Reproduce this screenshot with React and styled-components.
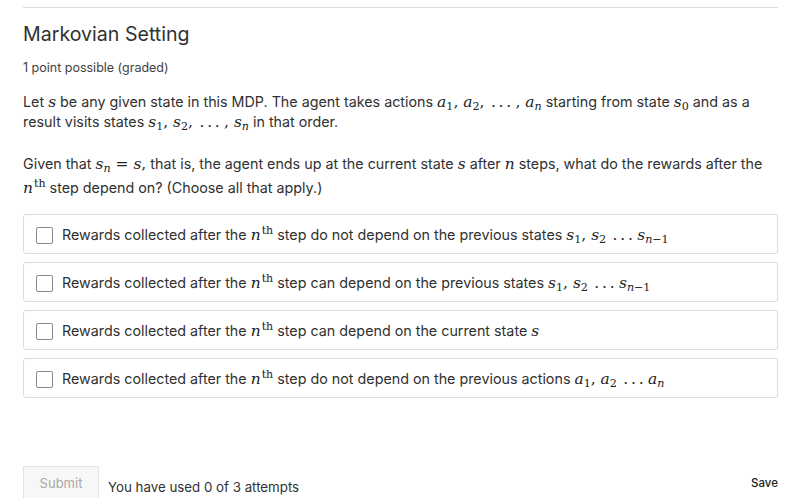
import styled, { createGlobalStyle } from "styled-components";

const Global = createGlobalStyle`
  body {
    margin: 0;
    background: #fff;
    font-family: Inter, "Noto Sans", sans-serif;
    color: #313131;
  }
`;

const Page = styled.div`
  padding: 7px 32px 0 23px;
  width: 810px;
  box-sizing: border-box;
`;

const Problem = styled.section`
  border-top: 1px solid #dcdcdc;
  padding-top: 14px;
`;

const Title = styled.h2`
  margin: 0;
  font-size: 19.6px;
  font-weight: 400;
  line-height: 24px;
  color: #313131;
`;

const Points = styled.div`
  margin-top: 14px;
  font-size: 12.5px;
  line-height: 16px;
  color: #414141;
`;

const Para = styled.p`
  margin: ${(p) => p.$top || 0}px 0 0;
  font-size: 14.3px;
  line-height: ${(p) => p.$lh || 20}px;
`;

const M = styled.span`
  font-family: "DejaVu Serif", "Liberation Serif", serif;
  font-style: italic;
  font-size: 1.08em;
  line-height: 1;
  white-space: nowrap;
  color: #222;
`;

const Sub = styled.sub`
  font-style: normal;
  font-size: 0.72em;
  vertical-align: -0.25em;
  line-height: 0;
`;

const SubI = styled(Sub)`
  font-style: italic;
`;

const Sup = styled.sup`
  font-style: normal;
  font-size: 0.72em;
  vertical-align: 0.55em;
  line-height: 0;
  margin-left: 1px;
`;

const Up = styled.span`
  font-style: normal;
`;

const Dots = styled.span`
  font-style: normal;
  letter-spacing: 0.18em;
  margin: 0 0.1em;
`;

const Options = styled.div`
  margin-top: 14px;
  display: flex;
  flex-direction: column;
  gap: 8px;
`;

const Option = styled.label`
  display: flex;
  align-items: center;
  gap: 9px;
  height: 40px;
  box-sizing: border-box;
  padding: 2px 12px 0;
  border: 1px solid #dcdcdc;
  border-radius: 3px;
  font-size: 14.3px;
  color: #313131;
`;

const Box = styled.span`
  width: 15px;
  height: 15px;
  flex: none;
  border: 1px solid #8a8a8a;
  border-radius: 2px;
  background: #fff;
`;

const Actions = styled.div`
  margin-top: 68px;
  display: flex;
  align-items: center;
  gap: 9px;
`;

const Submit = styled.button`
  width: 76px;
  height: 33px;
  border: 1px solid #e4e4e4;
  background: #f7f7f7;
  color: #a8a8a8;
  font-family: inherit;
  font-size: 13px;
  border-radius: 0;
  padding: 0;
`;

const Attempts = styled.span`
  font-size: 13.3px;
  color: #313131;
  margin-top: 8px;
`;

const Save = styled.span`
  margin-left: auto;
  font-size: 11.5px;
  font-weight: 500;
  color: #222;
  margin-top: 1px;
`;

const Nth = () => (
  <M>
    n<Sup>th</Sup>
  </M>
);

const options = [
  <>
    Rewards collected after the <Nth /> step do not depend on the previous states{" "}
    <M>
      s<Sub>1</Sub>
      <Up>, </Up>s<Sub>2</Sub> <Dots>...</Dots>s
      <SubI>
        n<Up>−1</Up>
      </SubI>
    </M>
  </>,
  <>
    Rewards collected after the <Nth /> step can depend on the previous states{" "}
    <M>
      s<Sub>1</Sub>
      <Up>, </Up>s<Sub>2</Sub> <Dots>...</Dots>s
      <SubI>
        n<Up>−1</Up>
      </SubI>
    </M>
  </>,
  <>
    Rewards collected after the <Nth /> step can depend on the current state <M>s</M>
  </>,
  <>
    Rewards collected after the <Nth /> step do not depend on the previous actions{" "}
    <M>
      a<Sub>1</Sub>
      <Up>, </Up>a<Sub>2</Sub> <Dots>...</Dots>a<SubI>n</SubI>
    </M>
  </>,
];

export default function App() {
  return (
    <Page>
      <Global />
      <Problem>
        <Title>Markovian Setting</Title>
        <Points>1 point possible (graded)</Points>
        <Para $top={16}>
          Let <M>s</M> be any given state in this MDP. The agent takes actions{" "}
          <M>
            a<Sub>1</Sub>
            <Up>, </Up>a<Sub>2</Sub>
            <Up>, </Up>
            <Dots>...</Dots>
            <Up>, </Up>a<SubI>n</SubI>
          </M>{" "}
          starting from state{" "}
          <M>
            s<Sub>0</Sub>
          </M>{" "}
          and as a result visits states{" "}
          <M>
            s<Sub>1</Sub>
            <Up>, </Up>s<Sub>2</Sub>
            <Up>, </Up>
            <Dots>...</Dots>
            <Up>, </Up>s<SubI>n</SubI>
          </M>{" "}
          in that order.
        </Para>
        <Para $top={20} $lh={24}>
          Given that{" "}
          <M>
            s<SubI>n</SubI> <Up>=</Up> s<Up>,</Up>
          </M>{" "}
          that is, the agent ends up at the current state <M>s</M> after <M>n</M>{" "}
          steps, what do the rewards after the <Nth /> step depend on? (Choose all
          that apply.)
        </Para>
        <Options>
          {options.map((o, i) => (
            <Option key={i}>
              <Box />
              <span>{o}</span>
            </Option>
          ))}
        </Options>
        <Actions>
          <Submit>Submit</Submit>
          <Attempts>You have used 0 of 3 attempts</Attempts>
          <Save>Save</Save>
        </Actions>
      </Problem>
    </Page>
  );
}
